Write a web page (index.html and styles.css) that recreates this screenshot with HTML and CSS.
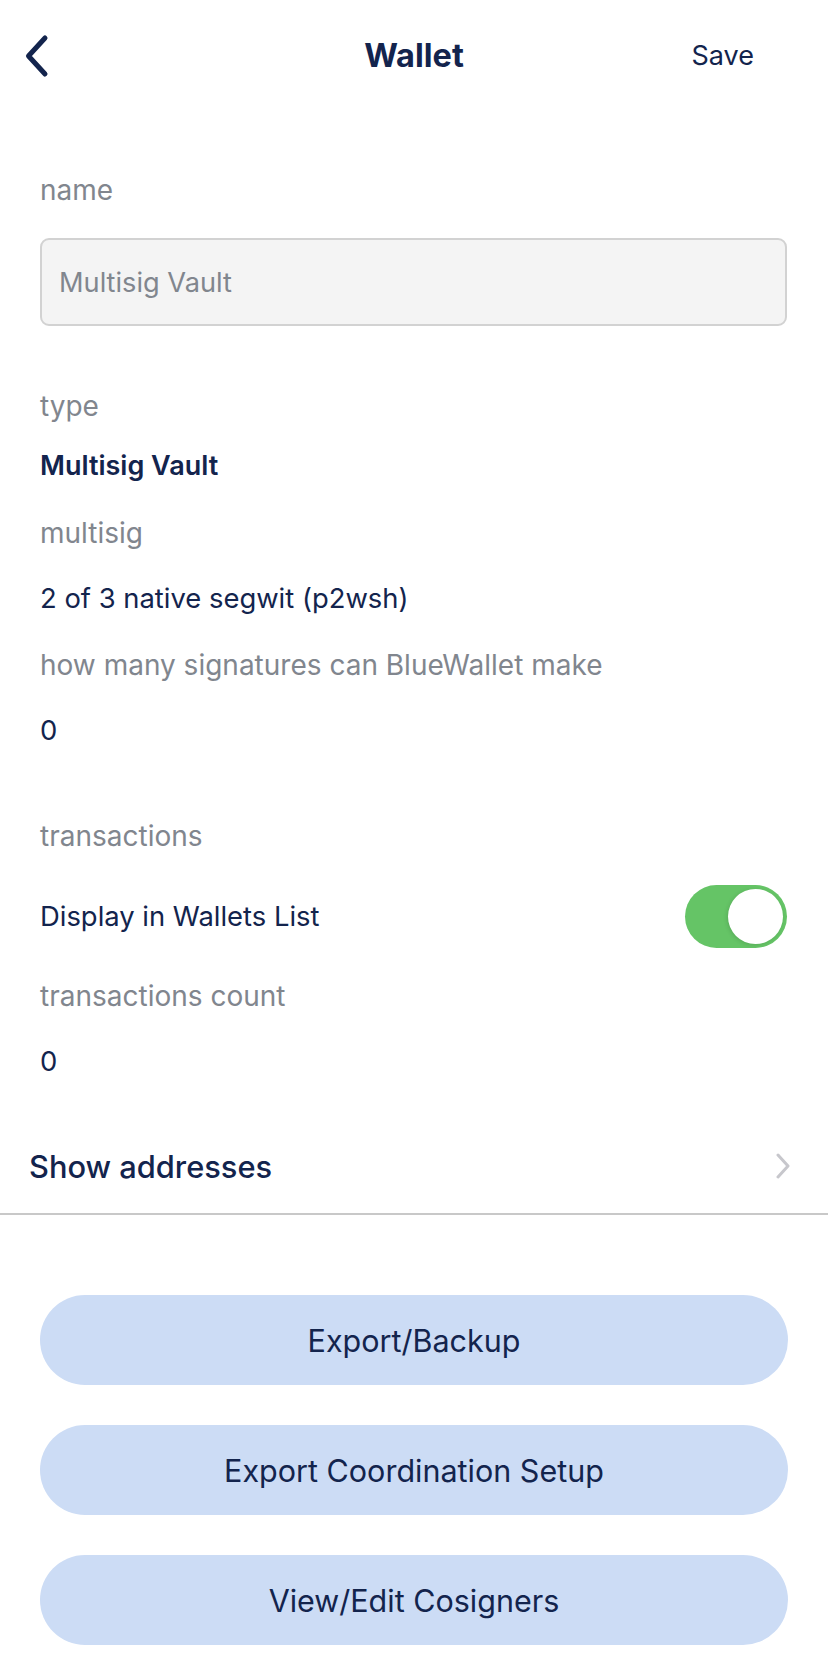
FILE: index.html
```html
<!DOCTYPE html>
<html lang="en">
<head>
<meta charset="utf-8">
<title>Wallet</title>
<link rel="stylesheet" href="styles.css">
</head>
<body>
<div class="screen">
  <header class="nav">
    <button class="nav-back" aria-label="Back">
      <svg width="24" height="44" viewBox="0 0 24 44"><polyline points="20,4 3.5,22 20,40" fill="none" stroke="#13244d" stroke-width="5" stroke-linecap="round" stroke-linejoin="round"/></svg>
    </button>
    <h1 class="nav-title">Wallet</h1>
    <button class="nav-save">Save</button>
  </header>

  <main class="content">
    <div class="label m-name">name</div>
    <div class="input m-input">Multisig Vault</div>

    <div class="label m-type">type</div>
    <div class="value strong m-v1">Multisig Vault</div>

    <div class="label m-l">multisig</div>
    <div class="value m-v">2 of 3 native segwit (p2wsh)</div>

    <div class="label m-l">how many signatures can BlueWallet make</div>
    <div class="value m-v">0</div>

    <div class="label m-tx">transactions</div>
    <div class="row-toggle">
      <span class="value">Display in Wallets List</span>
      <span class="switch"><span class="knob"></span></span>
    </div>

    <div class="label m-tc">transactions count</div>
    <div class="value m-v">0</div>
  </main>

  <div class="list-row">
    <span class="list-title">Show addresses</span>
    <svg class="list-chevron" width="14" height="26" viewBox="0 0 14 26"><polyline points="2,2 12,13 2,24" fill="none" stroke="#c7c7cc" stroke-width="3" stroke-linecap="round" stroke-linejoin="round"/></svg>
  </div>

  <div class="actions">
    <button class="pill">Export/Backup</button>
    <button class="pill">Export Coordination Setup</button>
    <button class="pill">View/Edit Cosigners</button>
  </div>
</div>
</body>
</html>
```

FILE: styles.css
```css
* { box-sizing: border-box; }
html, body { margin: 0; padding: 0; background: #ffffff; }
body {
  font-family: Inter, "Noto Sans", "Liberation Sans", sans-serif;
  color: #13244d;
  width: 828px;
}
.screen { display: flex; flex-direction: column; }

.nav {
  height: 112px;
  display: flex;
  align-items: center;
  justify-content: space-between;
  position: relative;
  padding: 0 74px 0 25px;
}
.nav-back,
.nav-save {
  background: none;
  border: 0;
  padding: 0;
  font-family: inherit;
  color: inherit;
}
.nav-back { width: 24px; height: 44px; display: flex; }
.nav-title {
  position: absolute;
  left: 0; right: 0; top: 0;
  margin: 0;
  height: 112px;
  line-height: 112px;
  text-align: center;
  font-size: 32.5px;
  font-weight: 700;
  pointer-events: none;
}
.nav-save { font-size: 27px; font-weight: 400; line-height: 40px; }

.content {
  display: flex;
  flex-direction: column;
  padding: 0 41px 0 40px;
}
.label {
  font-size: 28px;
  line-height: 40px;
  color: #81868e;
}
.value {
  font-size: 27.4px;
  line-height: 40px;
  color: #13244d;
}
.strong { font-weight: 600; font-size: 27px; }

.m-name { margin-top: 58px; }
.input {
  margin-top: 28px;
  height: 88px;
  border: 2px solid #d2d2d2;
  border-radius: 9px;
  background: #f4f4f4;
  color: #81868e;
  font-size: 27.2px;
  display: flex;
  align-items: center;
  padding-left: 17px;
}
.m-type { margin-top: 60px; }
.m-v1 { margin-top: 20px; }
.m-l { margin-top: 27px; }
.m-v { margin-top: 25px; }
.m-tx { margin-top: 66px; }

.row-toggle {
  margin-top: 28px;
  height: 64px;
  display: flex;
  align-items: center;
  justify-content: space-between;
}
.switch {
  width: 102px;
  height: 63px;
  border-radius: 32px;
  background: #65c466;
  display: flex;
  align-items: center;
  justify-content: flex-end;
  padding-right: 4px;
}
.knob {
  width: 55px;
  height: 55px;
  border-radius: 50%;
  background: #ffffff;
  box-shadow: -1px 1px 4px rgba(0,0,0,0.12);
}
.m-tc { margin-top: 28px; }

.list-row {
  margin-top: 38px;
  height: 96px;
  display: flex;
  align-items: center;
  justify-content: space-between;
  padding: 0 38px 0 29px;
  border-bottom: 2px solid #c8c8c8;
}
.list-title { font-size: 30.8px; font-weight: 500; color: #13244d; }

.actions {
  margin-top: 80px;
  padding: 0 40px;
  display: flex;
  flex-direction: column;
  gap: 40px;
}
.pill {
  height: 90px;
  border: 0;
  border-radius: 45px;
  background: #ccdcf5;
  color: #13244d;
  font-family: inherit;
  font-size: 30.5px;
  font-weight: 400;
}
```
